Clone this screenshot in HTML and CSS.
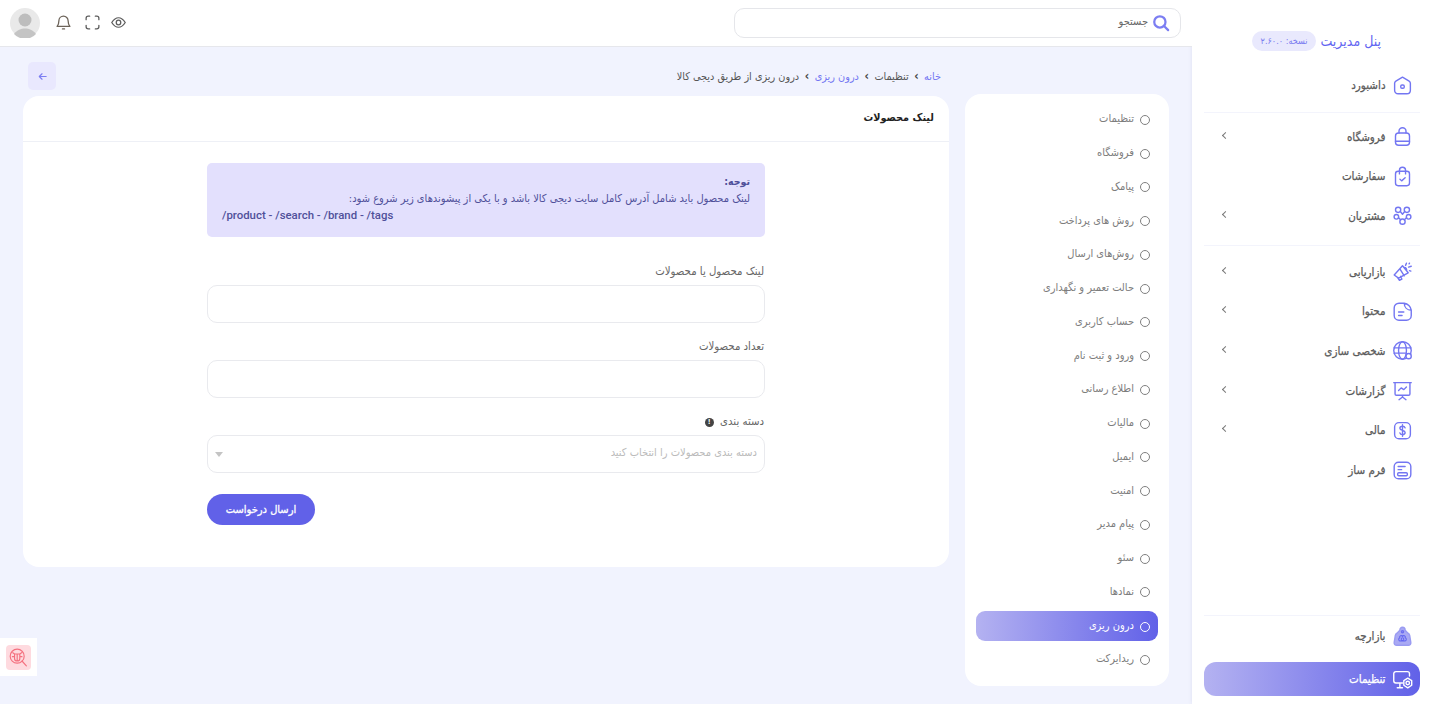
FILE: index.html
```html
<!DOCTYPE html>
<html lang="fa" dir="rtl">
<head>
<meta charset="utf-8">
<title>درون ریزی از طریق دیجی کالا</title>
<link rel="stylesheet" href="styles.css">
</head>
<body>
<div class="app">
  <aside class="sidebar">
    <div class="brand"><span class="brand-name">پنل مدیریت</span><span class="version">نسخه: ۲.۶۰.۰</span></div>
    <nav class="side-nav">
      <a class="side-item"><svg class="ico" viewBox="0 0 24 24"><path d="M12 2.500l7.600 4.500c1 .6 1.400 1.400 1.400 2.400v8c0 2.400-1.600 4-4 4H7c-2.400 0-4-1.600-4-4v-8c0-1 .4-1.800 1.400-2.400z"/><rect x="10" y="11.500" width="4" height="3.600" rx="1.400"/></svg><span>داشبورد</span></a>
      <hr class="side-rule rule-a">
      <a class="side-item"><svg class="ico" viewBox="0 0 24 24"><rect x="4" y="8" width="16" height="14" rx="3.500"/><path d="M8 8V6a4 4 0 0 1 8 0v2M4 17.500h16"/></svg><span>فروشگاه</span><i class="chev"></i></a>
      <a class="side-item"><svg class="ico" viewBox="0 0 24 24"><rect x="4" y="6" width="16" height="16.500" rx="3"/><path d="M8.500 9V5a3.500 3.500 0 0 1 7 0v4M9 15l2 2 4-3.500"/></svg><span>سفارشات</span></a>
      <a class="side-item"><svg class="ico" viewBox="0 0 24 24"><circle cx="7" cy="5.500" r="3"/><circle cx="17" cy="5.500" r="3"/><circle cx="5" cy="13.500" r="2.600"/><circle cx="19" cy="13.500" r="2.600"/><path d="M9.500 7.500l2.500 3 2.500-3"/><circle cx="12" cy="19" r="3"/><path d="M7.500 14.500l2.500 2.500M16.500 14.500L14 17"/></svg><span>مشتریان</span><i class="chev"></i></a>
      <hr class="side-rule rule-b">
      <a class="side-item"><svg class="ico" viewBox="0 0 24 24"><path d="M2.500 16L12 5.500l6.500 8-11 6zM6 18.500l2.500 3.500 2.800-1.200-1.300-3.300M9 9l5 8M14 7.500a2.500 2.500 0 0 1 2.500 3.500M16.500 2.500L15.500 5M22 6l-3 1M21.500 11.500L20 11M20 2.500l-.5.800"/></svg><span>بازاریابی</span><i class="chev"></i></a>
      <a class="side-item"><svg class="ico" viewBox="0 0 24 24"><path d="M14 2.500H8A5.500 5.500 0 0 0 2.500 8v8.500A5.500 5.500 0 0 0 8 22h8.500a5.500 5.500 0 0 0 5.500-5.500V10.500c-4.500 0-8-3-8-8zM14 2.500c4 .5 7.500 4 8 8M7.500 12.500h6M7.500 16.500h4"/></svg><span>محتوا</span><i class="chev"></i></a>
      <a class="side-item"><svg class="ico" viewBox="0 0 24 24"><circle cx="12" cy="12" r="10"/><ellipse cx="12" cy="12" rx="4.500" ry="10"/><path d="M2.500 9h19M2.500 15h13"/><circle cx="19" cy="18.500" r="3" class="dot"/></svg><span>شخصی سازی</span><i class="chev"></i></a>
      <a class="side-item"><svg class="ico" viewBox="0 0 24 24"><path d="M2 3h20M3.500 3v13a1.500 1.500 0 0 0 1.500 1.500h14a1.500 1.500 0 0 0 1.500-1.500V3M12 17.500v2M8 22.500l4-3 4 3M7.500 12l3-3 3 2 3-3"/></svg><span>گزارشات</span><i class="chev"></i></a>
      <a class="side-item"><svg class="ico" viewBox="0 0 24 24"><rect x="3" y="3" width="18" height="18.500" rx="5"/><path d="M15 9c-.4-1.200-1.600-1.800-3-1.800-1.700 0-3 .8-3 2.300 0 3.200 6 1.600 6 4.800 0 1.500-1.300 2.400-3 2.400-1.500 0-2.700-.7-3-2M12 5.500v13"/></svg><span>مالی</span><i class="chev"></i></a>
      <a class="side-item"><svg class="ico" viewBox="0 0 24 24"><rect x="2.500" y="2.500" width="19" height="19" rx="5"/><path d="M7 7.500h8M7 11h4"/><rect x="6.500" y="14.500" width="11" height="3.500" rx="1.200"/></svg><span>فرم ساز</span></a>
    </nav>
    <div class="side-bottom">
      <hr class="side-rule">
      <a class="side-item market"><svg class="ico" viewBox="0 0 24 24"><path class="fill" d="M12 1.500c2 0 3 1.500 3 3.300L18 8c1.200.5 2 1.500 2.200 2.800l1.300 8c.3 2-1 3.200-2.800 3.200H5.300c-1.800 0-3.100-1.200-2.800-3.200l1.300-8C4 9.500 4.800 8.500 6 8l3-3.200c0-1.800 1-3.300 3-3.300z"/><circle cx="12" cy="6.500" r="1.200" class="soft"/><circle cx="12" cy="15" r="1.500" class="hole"/><path class="hole" d="M9 13.500a1.500 1.500 0 0 1 3-1.500 1.500 1.500 0 0 1 3 1.500 1.800 1.800 0 0 1-1 3.500h-4a1.800 1.800 0 0 1-1-3.500z"/></svg><span>بازارچه</span></a>
      <a class="side-item side-active"><svg class="ico" viewBox="0 0 24 24"><path d="M20 8V5.500A2.500 2.500 0 0 0 17.500 3h-13A2.500 2.500 0 0 0 2 5.500v8A2.500 2.500 0 0 0 4.500 16H12M9 16v5M6 21.500h6"/><circle cx="18" cy="16" r="2"/><path d="M18 10.500l4.500 2.700v5.400L18 21.500l-4.500-2.900v-5.400z"/></svg><span>تنظیمات</span></a>
    </div>
  </aside>

  <div class="main">
    <header class="topbar">
      <label class="search">
        <svg class="search-ico" viewBox="0 0 24 24"><circle cx="10.500" cy="10.500" r="7.500"/><path d="M16 16l5.500 5.500"/></svg>
        <span>جستجو</span>
      </label>
      <div class="tools">
        <svg class="tool" viewBox="0 0 24 24"><path d="M2.500 12c3-5.500 6-8 9.500-8s6.500 2.500 9.500 8c-3 5.500-6 8-9.500 8s-6.500-2.500-9.500-8z" transform="matrix(1 0 0 .85 0 1.800)"/><circle cx="12" cy="12" r="3.200"/></svg>
        <svg class="tool" viewBox="0 0 24 24"><path d="M8 3H6a3 3 0 0 0-3 3v2M16 3h2a3 3 0 0 1 3 3v2M21 16v2a3 3 0 0 1-3 3h-2M8 21H6a3 3 0 0 1-3-3v-2"/></svg>
        <svg class="tool bell" viewBox="0 0 24 24"><path d="M12 3a6.500 6.500 0 0 0-6.500 6.500c0 4.500-1 6-2.500 8h18c-1.500-2-2.500-3.500-2.500-8A6.500 6.500 0 0 0 12 3zM10.500 21h3"/></svg>
        <div class="avatar"><svg viewBox="0 0 30 30"><circle cx="15" cy="15" r="15" fill="#e9e9e9"/><circle cx="15" cy="12" r="6.500" fill="#bdbdbd"/><path d="M4 26c3-4 7-5.500 11-5.500s8 1.500 11 5.500a15 15 0 0 1-22 0z" fill="#c4c4c4"/></svg></div>
      </div>
    </header>

    <div class="content">
      <ul class="settings-nav">
        <li>تنظیمات</li>
        <li>فروشگاه</li>
        <li>پیامک</li>
        <li>روش های پرداخت</li>
        <li>روش‌های ارسال</li>
        <li>حالت تعمیر و نگهداری</li>
        <li>حساب کاربری</li>
        <li>ورود و ثبت نام</li>
        <li>اطلاع رسانی</li>
        <li>مالیات</li>
        <li>ایمیل</li>
        <li>امنیت</li>
        <li>پیام مدیر</li>
        <li>سئو</li>
        <li>نمادها</li>
        <li class="on"><span>درون ریزی</span></li>
        <li>ریدایرکت</li>
      </ul>

      <section class="column">
        <div class="crumb-row">
          <div class="crumbs"><a>خانه</a><b>›</b><span>تنظیمات</span><b>›</b><a>درون ریزی</a><b>›</b><span>درون ریزی از طریق دیجی کالا</span></div>
          <button class="back" type="button"><svg viewBox="0 0 24 24"><path d="M20 12H5M11 6l-6 6 6 6"/></svg></button>
        </div>
        <div class="card">
          <h1 class="card-title">لینک محصولات</h1>
          <form class="form">
            <div class="alert">
              <strong>توجه:</strong>
              <p>لینک محصول باید شامل آدرس کامل سایت دیجی کالا باشد و با یکی از پیشوندهای زیر شروع شود:</p>
              <p class="paths" dir="ltr">/product - /search - /brand - /tags</p>
            </div>
            <div class="field first"><label>لینک محصول یا محصولات</label><div class="input"></div></div>
            <div class="field"><label>تعداد محصولات</label><div class="input"></div></div>
            <div class="field"><label>دسته بندی <i class="info">!</i></label><div class="input select"><span>دسته بندی محصولات را انتخاب کنید</span><i class="caret"></i></div></div>
            <button class="submit" type="button">ارسال درخواست</button>
          </form>
        </div>
      </section>
    </div>
  </div>

  <div class="bug"><span><svg viewBox="0 0 24 24"><circle cx="10.500" cy="10.500" r="8"/><path d="M16 16l5 5.500M7.500 8h6v5a3 3 0 0 1-6 0zM10.500 8v8M5.500 6.500l2 1.500M15.500 6.500l-2 1.500M5 11h2.500M13.500 11H16"/></svg></span></div>
</div>
</body>
</html>
```

FILE: styles.css
```css
* { box-sizing: border-box; }
html, body { margin: 0; height: 100%; overflow: hidden; }
body {
  font-family: "DejaVu Sans Condensed", "DejaVu Sans", "Noto Sans", sans-serif;
  font-stretch: condensed;
  font-size: 11px;
  color: #555;
  background: #f1f3fe;
}
svg { display: block; }
.app { display: flex; height: 704px; position: relative; }

/* sidebar */
.sidebar {
  width: 239px;
  flex: none;
  background: #fff;
  box-shadow: 0 0 4px rgba(90, 90, 160, .12);
  padding: 0 11px 8px 12px;
  display: flex;
  flex-direction: column;
}
.brand { display: flex; align-items: center; gap: 4px; padding: 16px 39px 0 0; height: 65.500px; }
.brand-name { color: #6366f1; font-size: 14px; font-weight: 500; }
.version { background: #e9e9fd; color: #7a7cf0; border-radius: 10px; height: 20px; line-height: 20px; padding: 0 9px; font-size: 9px; }
.side-nav { display: flex; flex-direction: column; }
.side-item { display: flex; align-items: center; gap: 6px; height: 39.700px; padding-right: 7.500px; font-size: 11.500px; color: #5a5a5a; -webkit-text-stroke: .25px #5a5a5a; position: relative; flex: none; }
.ico { width: 21px; height: 21px; fill: none; stroke: #7376f2; stroke-width: 1.600; stroke-linecap: round; stroke-linejoin: round; flex: none; }
.ico .dot { fill: #fff; }
.ico .fill { fill: #a9a9f3; stroke: #9a9bf2; }
.ico .soft { stroke: #6d6ff0; }
.ico .hole { stroke: #6366f1; fill: none; stroke-width: 1.200; }
.chev { position: absolute; left: 19px; top: 50%; width: 5px; height: 5px; margin-top: -4px; border-left: 1.500px solid #777; border-bottom: 1.500px solid #777; transform: rotate(45deg); }
.side-rule { border: 0; height: 1px; background: #f3f4fc; margin: 0; flex: none; }
.rule-a { margin: 6.500px 0 4px; }
.rule-b { margin: 9px 0 6px; }
.side-bottom { margin-top: auto; display: flex; flex-direction: column; }
.side-bottom .market { height: 40px; margin-bottom: 6px; }
.side-active { height: 34px; border-radius: 12px; background: linear-gradient(to left, #6161e8, #b4b2f1); color: #fff; -webkit-text-stroke: .25px #fff; }
.side-active .ico { stroke: #fff; }

/* main */
.main { flex: 1; min-width: 0; display: flex; flex-direction: column; }
.topbar { height: 47px; flex: none; background: #fff; border-bottom: 1px solid #e6e7ec; display: flex; align-items: center; justify-content: space-between; padding: 0 11px 1px 10px; }
.search { width: 447px; height: 30px; border: 1px solid #e5e6ea; border-radius: 10px; display: flex; align-items: center; gap: 4px; padding: 0 10px; color: #666; font-size: 11px; }
.search span { margin-bottom: 2px; }
.search-ico { width: 18px; height: 18px; fill: none; stroke: #7c7ef2; stroke-width: 3; stroke-linecap: round; }
.tools { display: flex; align-items: center; gap: 9px; direction: ltr; flex-direction: row-reverse; }
.tool { width: 17px; height: 17px; fill: none; stroke: #5c5c5c; stroke-width: 1.800; stroke-linecap: round; stroke-linejoin: round; }
.tool.bell { margin: 0 3px 0 6px; stroke: #6b6258; }
.avatar { width: 30px; height: 30px; }

.content { flex: 1; display: flex; gap: 16px; padding: 0 23px; min-height: 0; }
.settings-nav { list-style: none; margin: 47px 0 0; padding: 8px 11px; width: 204px; height: 592px; background: #fff; border-radius: 16px; flex: none; }
.settings-nav li { height: 33.750px; display: flex; align-items: center; position: relative; padding-right: 24px; font-size: 11px; color: #7d7d7d; border-radius: 9px; }
.settings-nav li::before { content: ""; position: absolute; right: 8.500px; top: 50%; width: 8px; height: 8px; margin-top: -4px; border-radius: 50%; border: 1.500px solid #808080; }
.settings-nav li.on { color: #fff; height: 30px; margin: 2.400px 0 1.400px; background: linear-gradient(to left, #6161e8, #b4b2f1); }
.settings-nav li.on::before { border-color: #fff; }

.column { flex: 1; min-width: 0; display: flex; flex-direction: column; }
.crumb-row { height: 49px; padding: 15px 8px 6px 5px; display: flex; justify-content: space-between; align-items: center; flex: none; }
.crumbs { display: flex; align-items: center; gap: 5.500px; font-size: 10.800px; color: #555; }
.crumbs a { color: #7376f2; }
.crumbs b { color: #444; font-size: 12px; font-weight: 700; }
.back { width: 28px; height: 28px; border: 0; padding: 0; background: #e9e8fe; border-radius: 5px; display: flex; align-items: center; justify-content: center; }
.back svg { width: 11px; height: 11px; fill: none; stroke: #7c7ef2; stroke-width: 2.500; stroke-linecap: round; stroke-linejoin: round; }
.card { height: 471px; background: #fff; border-radius: 16px; flex: none; }
.card-title { margin: 0; height: 46px; line-height: 43px; padding: 0 15px; font-size: 10.800px; font-weight: 700; color: #222; border-bottom: 1px solid #eef0f6; }
.form { width: 558px; margin: 21px auto 0; }
.alert { height: 74px; border-radius: 5px; background: #e3e0fd; color: #50509a; padding: 10px 15px; font-size: 11px; line-height: 17px; }
.alert strong { display: block; font-size: 10.500px; }
.alert p { margin: 0; }
.paths { font-family: Roboto, sans-serif; font-stretch: normal; font-weight: 500; font-size: 11.400px; }
.field { margin-top: 16px; }
.field.first { margin-top: 27px; }
.field label { display: block; height: 15px; line-height: 15px; padding-right: 1px; margin-bottom: 6px; font-size: 11.300px; color: #666; }
.info { display: inline-block; width: 9px; height: 9px; border-radius: 50%; background: #444; color: #fff; font-style: normal; font-size: 7px; line-height: 9px; text-align: center; font-weight: 700; margin-right: 3px; vertical-align: 1px; }
.input { height: 38px; border: 1px solid #e9eaee; border-radius: 10px; background: #fff; }
.select { display: flex; align-items: center; justify-content: space-between; padding: 0 7px 3px; color: #bbb; font-size: 11px; }
.caret { border: 4px solid transparent; border-top: 5px solid #c4c4c4; border-bottom: 0; margin-top: 3px; }
.submit { display: block; margin: 21px auto 0 0; width: 108px; height: 31px; border: 0; border-radius: 16px; background: #6161e8; color: #fff; -webkit-text-stroke: .3px #fff; font: 400 11px "DejaVu Sans Condensed", "DejaVu Sans", sans-serif; }

.bug { position: absolute; left: 0; top: 638px; width: 37px; height: 38px; background: #fff; display: flex; align-items: center; justify-content: center; }
.bug span { width: 25px; height: 25px; border-radius: 4px; background: #fedadf; display: flex; align-items: center; justify-content: center; }
.bug svg { width: 21px; height: 21px; fill: none; stroke: #f4707f; stroke-width: 1.300; stroke-linecap: round; stroke-linejoin: round; }
```
